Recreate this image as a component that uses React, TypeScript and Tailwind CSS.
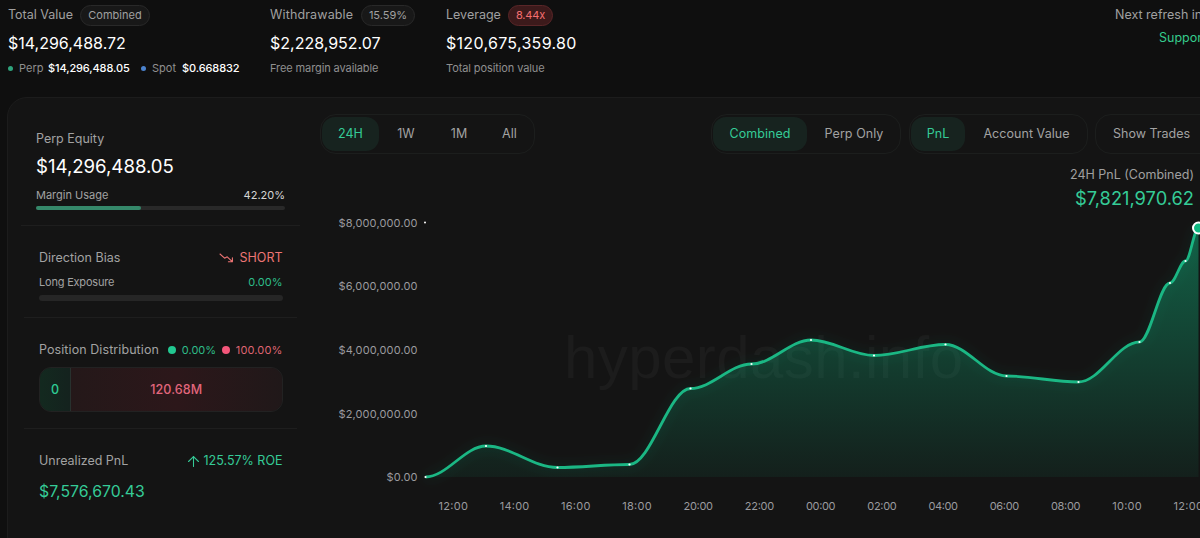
import React from 'react';
import { ArrowUp } from 'lucide-react';
import clsx from 'clsx';

type Point = [number, number];

const points: Point[] = [
  [105.5, 307],
  [166, 276],
  [237.5, 297.5],
  [309.5, 294.5],
  [370.5, 218.5],
  [431.5, 194],
  [491, 170],
  [554, 185.5],
  [625.5, 174.5],
  [686.5, 206],
  [758.5, 212],
  [819.5, 172],
  [850, 113],
  [865.5, 91],
  [878.5, 58],
];

const yTicks = [
  { label: '$8,000,000.00', y: 52.5, width: 79 },
  { label: '$6,000,000.00', y: 116, width: 79 },
  { label: '$4,000,000.00', y: 180, width: 79 },
  { label: '$2,000,000.00', y: 243.5, width: 79 },
  { label: '$0.00', y: 307, width: 31 },
];

const xTicks = ['12:00', '14:00', '16:00', '18:00', '20:00', '22:00', '00:00', '02:00', '04:00', '06:00', '08:00', '10:00', '12:00'];

// Every segment leaves and enters its points horizontally
const linePath = points.reduce((path, [x, y], i) => {
  if (i === 0) return `M${x} ${y}`;
  const [px, py] = points[i - 1];
  const d = (x - px) * 0.35;
  return `${path} C${px + d} ${py} ${x - d} ${y} ${x} ${y}`;
}, '');

const areaPath = `${linePath} V307 H105.5 Z`;

const TrendDownIcon: React.FC = () => (
  <svg width="15" height="12" viewBox="0 0 15 12" fill="none" stroke="currentColor" strokeWidth="1.1" strokeLinecap="round" strokeLinejoin="round">
    <path d="M1 2 L5.6 6.2 L8.2 4.8 L13.3 9.6 M13.4 5.8 V9.7 H9.4" />
  </svg>
);

const Toggle: React.FC<{ items: { label: string; className: string }[]; className?: string }> = ({ items, className }) => (
  <div className={clsx('flex h-10 shrink-0 rounded-[16px] border border-[#1c1e1d] p-[2px] pl-px', className)}>
    {items.map((item, i) => (
      <button
        key={item.label}
        className={clsx(
          'flex shrink-0 items-center justify-center whitespace-nowrap rounded-[13px] text-[12.5px] tracking-[0.05px]',
          i === 0 ? 'bg-[#17231f] text-[#35cb97]' : 'text-[#a2a2a2]',
          item.className,
        )}
      >
        {item.label}
      </button>
    ))}
  </div>
);

const Summary: React.FC = () => (
  <header className="flex h-[97px] shrink-0 pl-2 pt-[5px]">
    <div className="w-[262px] shrink-0">
      <div className="flex h-5 items-center gap-2">
        <span className="w-[64px] whitespace-nowrap pt-px text-[12.5px] text-[#a0a0a0]">Total Value</span>
        <span className="flex h-[21px] w-[70px] items-center justify-center rounded-full border border-[#292929] bg-[#181818] text-[11px] text-[#a0a0a0]">Combined</span>
      </div>
      <div className="mt-[6px] h-6 text-[16px] leading-6 text-white">$14,296,488.72</div>
      <div className="mt-[5px] flex h-4 items-center whitespace-nowrap text-[11px]">
        <span className="mr-[6px] size-[5px] rounded-full bg-[#2fa37c]" />
        <span className="w-[29px] text-[#8f8f8f]">Perp</span>
        <span className="w-[93px] font-medium tracking-[-0.12px] text-white">$14,296,488.05</span>
        <span className="mr-[6px] size-[5px] rounded-full bg-[#4b82cd]" />
        <span className="w-[30px] text-[#8f8f8f]">Spot</span>
        <span className="font-medium tracking-[-0.1px] text-white">$0.668832</span>
      </div>
    </div>
    <div className="w-[176px] shrink-0">
      <div className="flex h-5 items-center gap-2">
        <span className="w-[83px] whitespace-nowrap pt-px text-[12.5px] tracking-[0.15px] text-[#a0a0a0]">Withdrawable</span>
        <span className="flex h-[21px] w-[54px] items-center justify-center rounded-full border border-[#292929] bg-[#181818] text-[11px] text-[#a0a0a0]">15.59%</span>
      </div>
      <div className="mt-[6px] h-6 text-[16px] leading-6 text-white">$2,228,952.07</div>
      <div className="mt-[5px] h-4 text-[11px] leading-4 tracking-[-0.1px] text-[#8f8f8f]">Free margin available</div>
    </div>
    <div className="flex-1">
      <div className="flex h-5 items-center gap-2">
        <span className="w-[54px] whitespace-nowrap pt-px text-[12.5px] text-[#a0a0a0]">Leverage</span>
        <span className="flex h-[21px] w-[45px] items-center justify-center rounded-full border border-[#5a2628] bg-[#3c1a1b] text-[11px] tracking-[-0.2px] text-[#f56f70]">8.44x</span>
      </div>
      <div className="mt-[6px] h-6 text-[16px] leading-6 tracking-[0.3px] text-white">$120,675,359.80</div>
      <div className="mt-[5px] h-4 text-[11px] leading-4 tracking-[-0.1px] text-[#8f8f8f]">Total position value</div>
    </div>
    <div className="w-[85px] shrink-0 whitespace-nowrap pt-px text-[12.5px]">
      <div className="h-[18px] leading-[18px] text-[#a0a0a0]">Next refresh in</div>
      <div className="mt-[5px] h-[18px] pl-11 leading-[18px] text-[#35cb8c]">Support us</div>
    </div>
  </header>
);

const Sidebar: React.FC = () => (
  <aside className="flex w-[312px] shrink-0 flex-col pl-[13px] pt-[13px] text-[12.5px] text-[#a2a2a2]">
    <section className="h-[115px] w-[279px] border-b border-[#1e1e1e] pl-[15px] pr-[15px] pt-[18px]">
      <div className="h-5 leading-5">Perp Equity</div>
      <div className="mt-[3px] h-7 text-[18.6px] leading-7 text-white">$14,296,488.05</div>
      <div className="mt-[7px] flex h-4 items-center justify-between text-[11px]">
        <span>Margin Usage</span>
        <span className="text-[#d6d6d6]">42.20%</span>
      </div>
      <div className="mt-[3px] h-1 w-[249px] rounded-full bg-[#292929]">
        <div className="h-1 w-[42.2%] rounded-full bg-[#35886a]" />
      </div>
    </section>
    <section className="ml-[3px] h-[92px] w-[273px] border-b border-[#1e1e1e] pl-[15px] pr-[14.5px] pt-[22px]">
      <div className="flex h-5 items-center justify-between">
        <span>Direction Bias</span>
        <span className="flex items-center gap-[6px] text-[#ed7474]">
          <TrendDownIcon />
          SHORT
        </span>
      </div>
      <div className="mt-[6px] flex h-4 items-center justify-between text-[11px]">
        <span className="tracking-[-0.2px]">Long Exposure</span>
        <span className="text-[#2ebd89]">0.00%</span>
      </div>
      <div className="mt-[5px] h-[6px] rounded-full bg-[#262626]" />
    </section>
    <section className="ml-[3px] h-[111px] w-[273px] border-b border-[#1e1e1e] pl-[15px] pr-[14.5px] pt-[22px]">
      <div className="flex h-5 items-center whitespace-nowrap">
        <span className="w-[129px] tracking-[0.08px]">Position Distribution</span>
        <span className="mr-[6px] size-2 rounded-full bg-[#22c891]" />
        <span className="w-[40px] text-[11px] text-[#2ebd89]">0.00%</span>
        <span className="mr-[6px] size-2 rounded-full bg-[#f4577b]" />
        <span className="text-[11px] tracking-[0.15px] text-[#df6572]">100.00%</span>
      </div>
      <div className="mt-[7px] flex h-[45px] overflow-hidden rounded-[12px] border border-[#222222] text-[12.5px] font-medium">
        <div className="flex w-[31px] items-center justify-center border-r border-[#28312e] bg-gradient-to-r from-[#13291f] to-[#14221e] pt-px text-[#2ecb94]">0</div>
        <div className="flex flex-1 items-center justify-center bg-gradient-to-r from-[#241819] via-[#2c171a] to-[#201819] pt-px tracking-[0.1px] text-[#e2667c]">120.68M</div>
      </div>
    </section>
    <section className="ml-[3px] w-[273px] pl-[15px] pr-[14.5px] pt-[22px]">
      <div className="flex h-5 items-center justify-between">
        <span>Unrealized PnL</span>
        <span className="flex items-center gap-[2px] text-[#35cb97]">
          <ArrowUp size={17} strokeWidth={1.5} />
          125.57% ROE
        </span>
      </div>
      <div className="mt-[9px] h-6 text-[15.8px] leading-6 text-[#35cb97]">$7,576,670.43</div>
    </section>
  </aside>
);

const PnlChart: React.FC = () => (
  <svg width="880" height="368" viewBox="0 0 880 368" className="block shrink-0">
    <defs>
      <linearGradient id="area" x1="0" y1="58" x2="0" y2="307" gradientUnits="userSpaceOnUse">
        <stop offset="0" stopColor="#10b981" stopOpacity="0.46" />
        <stop offset="1" stopColor="#10b981" stopOpacity="0.07" />
      </linearGradient>
      <filter id="glow" x="-5%" y="-10%" width="110%" height="120%">
        <feGaussianBlur stdDeviation="6" />
      </filter>
    </defs>

    <text x="244" y="208" textLength="399" fontSize="60" fill="#ffffff" fillOpacity="0.035" className="font-['Liberation_Sans',sans-serif]">
      hyperdash.info
    </text>

    <path d={linePath} fill="none" stroke="#10b981" strokeWidth="5" strokeOpacity="0.12" filter="url(#glow)" />
    <path d={areaPath} fill="url(#area)" />
    <path d={linePath} fill="none" stroke="#1bb784" strokeWidth="2.8" />

    {points.slice(0, -1).map(([x, y]) => (
      <circle key={x} cx={x} cy={y} r="1.1" fill="#ffffff" />
    ))}
    <circle cx="105" cy="52.5" r="1" fill="#ffffff" />
    <circle cx="878.5" cy="58" r="5.5" fill="#10b981" stroke="#ffffff" strokeWidth="2" />

    <g fontSize="11" fill="#9b9b9f">
      {yTicks.map((tick) => (
        <text key={tick.label} x={97.5 - tick.width} y={tick.y + 4} textLength={tick.width}>
          {tick.label}
        </text>
      ))}
      {xTicks.map((label, i) => (
        <text key={i} x={118.5 + i * 61.25} y="339.5" textLength="29.5">
          {label}
        </text>
      ))}
    </g>
  </svg>
);

const ChartPanel: React.FC = () => (
  <main className="flex w-[880px] shrink-0 flex-col pt-4">
    <div className="flex shrink-0">
      <Toggle
        items={[
          { label: '24H', className: 'w-[57px]' },
          { label: '1W', className: 'w-[54px]' },
          { label: '1M', className: 'w-[52px]' },
          { label: 'All', className: 'w-[49px]' },
        ]}
        className="mr-[176px] w-[215px]"
      />
      <Toggle
        items={[
          { label: 'Combined', className: 'w-[94px]' },
          { label: 'Perp Only', className: 'w-[94px]' },
        ]}
        className="mr-[8px] w-[190px]"
      />
      <Toggle
        items={[
          { label: 'PnL', className: 'w-[54px]' },
          { label: 'Account Value', className: 'w-[123px]' },
        ]}
        className="mr-[7px] w-[179px]"
      />
      <button className="flex h-10 w-[140px] shrink-0 items-center whitespace-nowrap rounded-[16px] border border-[#1c1e1d] pl-[17px] text-[12.5px] text-[#a2a2a2]">
        Show Trades
      </button>
    </div>
    <div className="-mb-[48px] mt-[11px] flex h-[53px] shrink-0 flex-col items-end pr-[6px]">
      <div className="h-5 text-[12.5px] leading-5 text-[#a0a0a0]">24H PnL (Combined)</div>
      <div className="-mt-px h-7 text-[18.3px] leading-7 text-[#35cb97]">$7,821,970.62</div>
    </div>
    <PnlChart />
  </main>
);

const App: React.FC = () => (
  <div className="flex h-[538px] w-[1200px] flex-col overflow-hidden bg-[#0f0f0f] font-['Inter',sans-serif]">
    <Summary />
    <div className="ml-[7px] flex h-[460px] w-[1230px] shrink-0 rounded-[20px] border border-[#1c1c1c] bg-[#141414]">
      <Sidebar />
      <ChartPanel />
    </div>
  </div>
);

export default App;
